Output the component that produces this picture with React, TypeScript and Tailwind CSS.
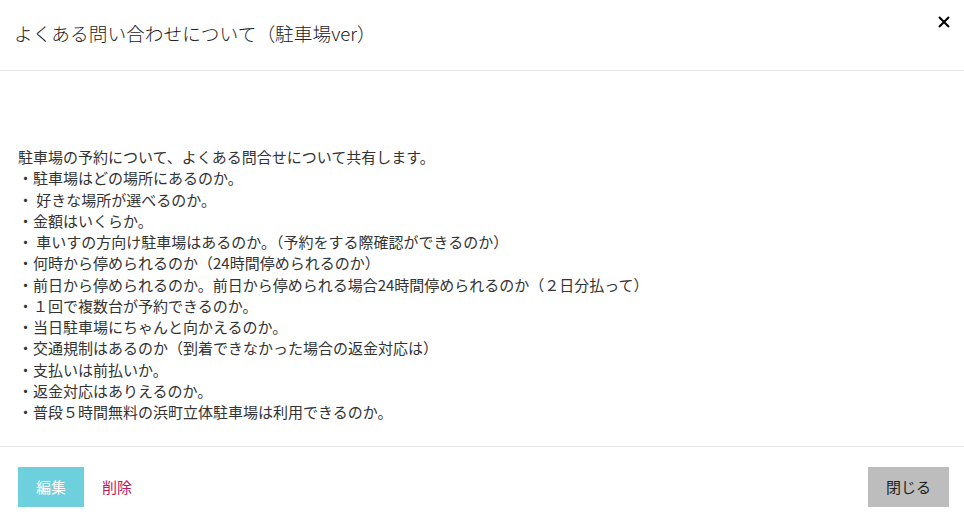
import React from 'react';

const lines = [
  '駐車場の予約について、よくある問合せについて共有します。',
  '・駐車場はどの場所にあるのか。',
  '・ 好きな場所が選べるのか。',
  '・金額はいくらか。',
  '・ 車いすの方向け駐車場はあるのか。（予約をする際確認ができるのか）',
  '・何時から停められるのか（24時間停められるのか）',
  '・前日から停められるのか。前日から停められる場合24時間停められるのか（２日分払って）',
  '・１回で複数台が予約できるのか。',
  '・当日駐車場にちゃんと向かえるのか。',
  '・交通規制はあるのか（到着できなかった場合の返金対応は）',
  '・支払いは前払いか。',
  '・返金対応はありえるのか。',
  '・普段５時間無料の浜町立体駐車場は利用できるのか。',
];

const App = () => {
  return (
    <div className="w-[964px] h-[524px] bg-white flex flex-col text-[#333] font-['Noto_Sans_CJK_JP','Noto_Sans',sans-serif]">
      {/* header */}
      <div className="h-[71px] flex items-start justify-between border-b border-[#e5e5e5] pl-[14px] pr-[14px]">
        <h1 className="mt-[20px] text-[18.7px] leading-[26px] font-light text-[#222]">よくある問い合わせについて（駐車場ver）</h1>
        <button className="mt-[16px] w-[12px] h-[12px] text-black">
          <svg viewBox="0 0 12 12" width="12" height="12" stroke="currentColor" strokeWidth="2">
            <path d="M1 1L11 11M11 1L1 11" />
          </svg>
        </button>
      </div>

      {/* body */}
      <div className="flex-1 px-[18px] pt-[75px] text-[15px] leading-[21.25px]">
        {lines.map((l, i) => (
          <div key={i} className="whitespace-pre">{l}</div>
        ))}
      </div>

      {/* footer */}
      <div className="h-[78px] border-t border-[#e5e5e5] flex items-start justify-between px-[18px] pt-[20px]">
        <div className="flex items-center gap-[18px]">
          <button className="w-[66px] h-[40px] bg-[#6dd0dc] text-white text-[15px]">編集</button>
          <button className="text-[#c2185b] text-[15px]">削除</button>
        </div>
        <button className="mr-[-3px] w-[81px] h-[40px] bg-[#bdbdbd] text-[#222] text-[15px]">閉じる</button>
      </div>
    </div>
  );
};

export default App;
